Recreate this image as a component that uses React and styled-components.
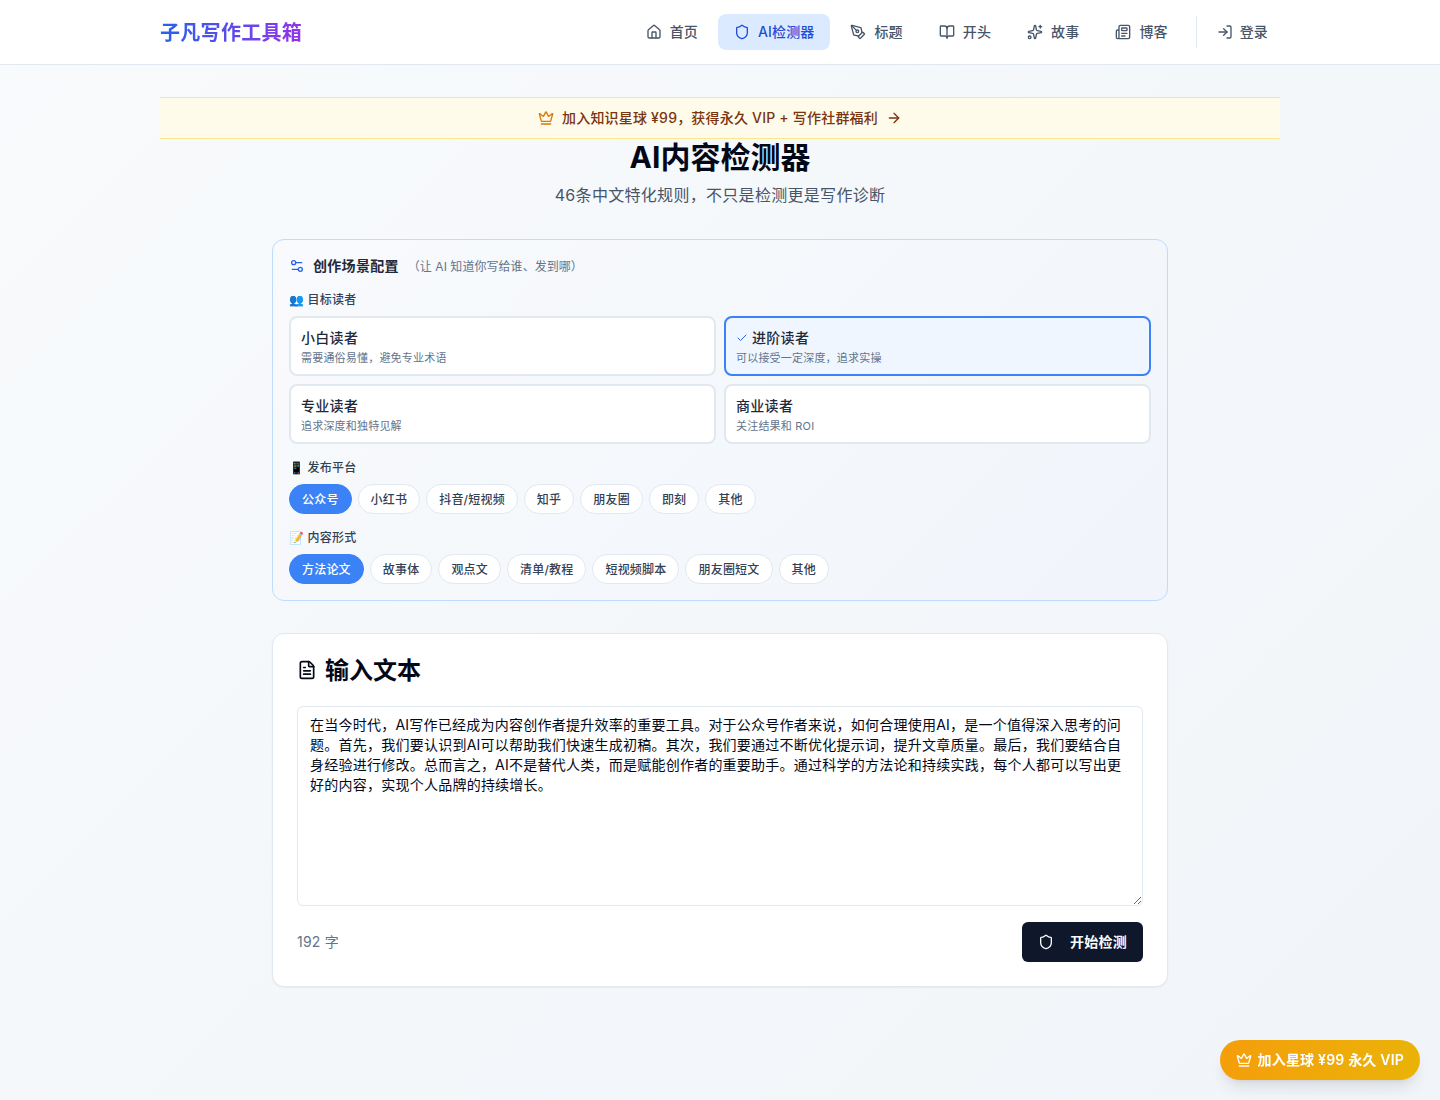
import React, { useState } from 'react';
import styled, { createGlobalStyle } from 'styled-components';
import {
  House,
  Shield,
  PenTool,
  BookOpen,
  Sparkles,
  Newspaper,
  LogIn,
  Crown,
  ArrowRight,
  Settings2,
  FileText,
  Check,
} from 'lucide-react';

const GlobalStyle = createGlobalStyle`
  * {
    box-sizing: border-box;
  }

  body {
    margin: 0;
    font-family: Inter, "Noto Sans CJK SC", "Noto Color Emoji", sans-serif;
    letter-spacing: 0.2px;
    color: #020817;
  }

  button {
    letter-spacing: inherit;
  }
`;

const Page = styled.div`
  min-height: 1100px;
  background: linear-gradient(135deg, #f8fafc 0%, #f1f5f9 100%);
`;

const TopBar = styled.header`
  height: 65px;
  background: #fff;
  border-bottom: 1px solid #e2e8f0;
`;

const TopBarInner = styled.div`
  width: 1120px;
  height: 64px;
  margin: 0 auto;
  display: flex;
  align-items: center;
  justify-content: space-between;
`;

const Logo = styled.a`
  margin-bottom: 2px;
  font-size: 20px;
  font-weight: 700;
  letter-spacing: 0.3px;
  background: linear-gradient(90deg, #2563eb, #9333ea);
  -webkit-background-clip: text;
  background-clip: text;
  color: transparent;
`;

const Nav = styled.nav`
  display: flex;
  align-items: center;
  gap: 4px;
`;

const NavItem = styled.a`
  height: 36px;
  display: flex;
  align-items: center;
  gap: ${(p) => (p.$login ? '7px' : '8px')};
  padding: 0 ${(p) => (p.$login ? '12px' : '16px')};
  border-radius: 8px;
  font-size: 14px;
  font-weight: 500;
  letter-spacing: 0.15px;
  color: ${(p) => (p.$active ? '#1d4ed8' : '#475569')};
  background: ${(p) => (p.$active ? '#dbeafe' : 'transparent')};
`;

const NavLabel = styled.span`
  margin-bottom: 2px;
`;

const NavDivider = styled.span`
  width: 1px;
  height: 32px;
  margin: 0 4px 0 8px;
  background: #e2e8f0;
`;

const Main = styled.main`
  width: 1120px;
  margin: 0 auto;
  padding-top: 32px;
`;

const Banner = styled.a`
  height: 42px;
  display: flex;
  align-items: center;
  justify-content: center;
  gap: 8px;
  background: #fffbeb;
  border-top: 1px solid #fde68a;
  border-bottom: 1px solid #fde68a;
  font-size: 14px;
  font-weight: 500;
  color: #78350f;

  .crown {
    color: #d97706;
  }
`;

const BannerLabel = styled.span`
  margin-bottom: 2px;
`;

const Title = styled.h1`
  margin: 0;
  text-align: center;
  font-size: 30px;
  line-height: 36px;
  font-weight: 700;
  letter-spacing: 0;
  color: #020817;
`;

const Subtitle = styled.p`
  margin: 6px 0 0;
  text-align: center;
  font-size: 16px;
  line-height: 28px;
  letter-spacing: 0.3px;
  color: #475569;
`;

const Column = styled.div`
  width: 896px;
  margin: 30px auto 0;
  display: flex;
  flex-direction: column;
  gap: 32px;
`;

const ConfigCard = styled.section`
  height: 362px;
  padding: 16px;
  background: linear-gradient(135deg, #f8fafc, #f1f5fb);
  border: 1px solid #bfdbfe;
  border-radius: 12px;
`;

const ConfigHead = styled.div`
  height: 20px;
  display: flex;
  align-items: center;
  margin-bottom: 16px;
  color: #2563eb;
`;

const ConfigTitle = styled.h3`
  margin: 0 0 2px 8px;
  font-size: 14px;
  font-weight: 600;
  letter-spacing: 0.3px;
  color: #1e293b;
`;

const ConfigHint = styled.span`
  margin: 0 0 2px 9px;
  font-size: 12px;
  letter-spacing: 0.05px;
  color: #64748b;
`;

const FieldLabel = styled.div`
  height: 16px;
  margin-bottom: 8px;
  display: flex;
  align-items: center;
  font-size: 12px;
  line-height: 16px;
  font-weight: 500;
  color: #334155;
`;

const ReaderGrid = styled.div`
  display: grid;
  grid-template-columns: 1fr 1fr;
  gap: 8px;
  margin-bottom: 16px;
`;

const ReaderCard = styled.button`
  height: 60px;
  padding: 2px 10px 0;
  text-align: left;
  font-family: inherit;
  background: ${(p) => (p.$active ? '#eff6ff' : '#fff')};
  border: 2px solid ${(p) => (p.$active ? '#3b82f6' : '#e2e8f0')};
  border-radius: 8px;
  cursor: pointer;
`;

const ReaderName = styled.div`
  display: flex;
  align-items: center;
  gap: 4px;
  font-size: 14px;
  line-height: 20px;
  font-weight: 500;
  letter-spacing: 0.3px;
  color: #1e293b;

  svg {
    color: #2563eb;
  }
`;

const ReaderDesc = styled.div`
  margin-top: 2px;
  font-size: 11px;
  line-height: 16px;
  color: #64748b;
`;

const PillRow = styled.div`
  display: flex;
  gap: 6px;
  margin-bottom: 16px;
`;

const Pill = styled.button`
  height: 30px;
  padding: 0 12px 2px;
  border-radius: 999px;
  font-family: inherit;
  font-size: 12px;
  font-weight: 500;
  color: ${(p) => (p.$active ? '#fff' : '#334155')};
  background: ${(p) => (p.$active ? '#3b82f6' : '#fff')};
  border: 1px solid ${(p) => (p.$active ? '#3b82f6' : '#e2e8f0')};
  cursor: pointer;
`;

const InputCard = styled.section`
  height: 354px;
  padding: 24px;
  background: #fff;
  border: 1px solid #e2e8f0;
  border-radius: 12px;
  box-shadow: 0 1px 2px rgba(0, 0, 0, 0.05);
`;

const InputHead = styled.h2`
  margin: 0 0 24px;
  height: 24px;
  display: flex;
  align-items: center;
  gap: 8px;
  font-size: 24px;
  font-weight: 600;
  letter-spacing: 0;
  color: #020817;

  span {
    margin-bottom: 4px;
  }
`;

const TextBox = styled.textarea`
  display: block;
  width: 100%;
  height: 200px;
  padding: 8px 12px;
  font-family: inherit;
  font-size: 14px;
  line-height: 20px;
  letter-spacing: 0.24px;
  color: #020817;
  background: #fff;
  border: 1px solid #e2e8f0;
  border-radius: 6px;
  outline: none;
`;

const InputFoot = styled.div`
  margin-top: 16px;
  display: flex;
  align-items: center;
  justify-content: space-between;
`;

const CharCount = styled.span`
  margin-bottom: 2px;
  font-size: 14px;
  color: #64748b;
`;

const StartButton = styled.button`
  height: 40px;
  width: 121px;
  display: flex;
  align-items: center;
  justify-content: center;
  gap: 16px;
  font-family: inherit;
  font-size: 14px;
  font-weight: 600;
  color: #f8fafc;
  background: #0f172a;
  border: none;
  border-radius: 6px;
  cursor: pointer;

  span {
    margin-bottom: 2px;
  }
`;

const FloatingVip = styled.a`
  position: fixed;
  right: 20px;
  bottom: 20px;
  height: 40px;
  padding: 0 16px;
  display: flex;
  align-items: center;
  gap: 6px;
  font-size: 14px;
  font-weight: 600;
  color: #fff;
  border-radius: 999px;
  background: linear-gradient(90deg, #f59e0b, #eab308);
  box-shadow: 0 10px 15px -3px rgba(0, 0, 0, 0.1), 0 4px 6px -4px rgba(0, 0, 0, 0.1);

  span {
    margin-bottom: 2px;
  }
`;

const navLinks = [
  { label: '首页', icon: House },
  { label: 'AI检测器', icon: Shield, active: true },
  { label: '标题', icon: PenTool },
  { label: '开头', icon: BookOpen },
  { label: '故事', icon: Sparkles },
  { label: '博客', icon: Newspaper },
];

const readers = [
  { name: '小白读者', desc: '需要通俗易懂，避免专业术语' },
  { name: '进阶读者', desc: '可以接受一定深度，追求实操' },
  { name: '专业读者', desc: '追求深度和独特见解' },
  { name: '商业读者', desc: '关注结果和 ROI' },
];

const platforms = ['公众号', '小红书', '抖音/短视频', '知乎', '朋友圈', '即刻', '其他'];
const formats = ['方法论文', '故事体', '观点文', '清单/教程', '短视频脚本', '朋友圈短文', '其他'];

const sampleText =
  '在当今时代，AI写作已经成为内容创作者提升效率的重要工具。对于公众号作者来说，如何合理使用AI，是一个值得深入思考的问题。首先，我们要认识到AI可以帮助我们快速生成初稿。其次，我们要通过不断优化提示词，提升文章质量。最后，我们要结合自身经验进行修改。总而言之，AI不是替代人类，而是赋能创作者的重要助手。通过科学的方法论和持续实践，每个人都可以写出更好的内容，实现个人品牌的持续增长。';

export default function App() {
  const [reader, setReader] = useState('进阶读者');
  const [platform, setPlatform] = useState('公众号');
  const [format, setFormat] = useState('方法论文');
  const [text, setText] = useState(sampleText);

  return (
    <Page>
      <GlobalStyle />
      <TopBar>
        <TopBarInner>
          <Logo>子凡写作工具箱</Logo>
          <Nav>
            {navLinks.map(({ label, icon: Icon, active }) => (
              <NavItem key={label} $active={active}>
                <Icon size={16} />
                <NavLabel>{label}</NavLabel>
              </NavItem>
            ))}
            <NavDivider />
            <NavItem $login>
              <LogIn size={16} />
              <NavLabel>登录</NavLabel>
            </NavItem>
          </Nav>
        </TopBarInner>
      </TopBar>

      <Main>
        <Banner>
          <Crown className="crown" size={16} />
          <BannerLabel>加入知识星球 ¥99，获得永久 VIP + 写作社群福利</BannerLabel>
          <ArrowRight size={16} />
        </Banner>
        <Title>AI内容检测器</Title>
        <Subtitle>46条中文特化规则，不只是检测更是写作诊断</Subtitle>

        <Column>
          <ConfigCard>
            <ConfigHead>
              <Settings2 size={16} />
              <ConfigTitle>创作场景配置</ConfigTitle>
              <ConfigHint>（让 AI 知道你写给谁、发到哪）</ConfigHint>
            </ConfigHead>

            <FieldLabel>👥 目标读者</FieldLabel>
            <ReaderGrid>
              {readers.map((r) => (
                <ReaderCard key={r.name} $active={reader === r.name} onClick={() => setReader(r.name)}>
                  <ReaderName>
                    {reader === r.name && <Check size={12} />}
                    {r.name}
                  </ReaderName>
                  <ReaderDesc>{r.desc}</ReaderDesc>
                </ReaderCard>
              ))}
            </ReaderGrid>

            <FieldLabel>📱 发布平台</FieldLabel>
            <PillRow>
              {platforms.map((p) => (
                <Pill key={p} $active={platform === p} onClick={() => setPlatform(p)}>
                  {p}
                </Pill>
              ))}
            </PillRow>

            <FieldLabel>📝 内容形式</FieldLabel>
            <PillRow>
              {formats.map((f) => (
                <Pill key={f} $active={format === f} onClick={() => setFormat(f)}>
                  {f}
                </Pill>
              ))}
            </PillRow>
          </ConfigCard>

          <InputCard>
            <InputHead>
              <FileText size={20} />
              <span>输入文本</span>
            </InputHead>
            <TextBox value={text} onChange={(e) => setText(e.target.value)} />
            <InputFoot>
              <CharCount>{text.length} 字</CharCount>
              <StartButton>
                <Shield size={16} />
                <span>开始检测</span>
              </StartButton>
            </InputFoot>
          </InputCard>
        </Column>
      </Main>

      <FloatingVip>
        <Crown size={16} />
        <span>加入星球 ¥99 永久 VIP</span>
      </FloatingVip>
    </Page>
  );
}
